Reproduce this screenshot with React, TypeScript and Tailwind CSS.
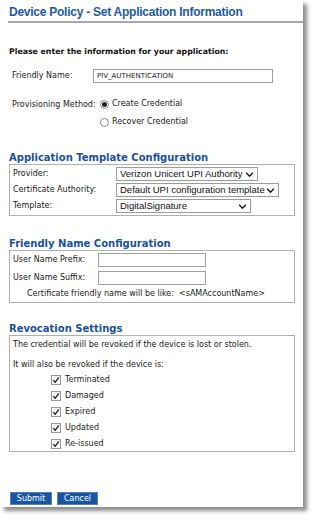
import React from 'react';

const verdana = { fontFamily: '"DejaVu Sans", Verdana, sans-serif' };
const arial = { fontFamily: '"Liberation Sans", Arial, sans-serif' };

function Radio({ checked }: { checked?: boolean }) {
  return (
    <span className="inline-flex h-[9px] w-[9px] items-center justify-center rounded-full border border-[#8a8a8a] bg-white">
      {checked && <span className="h-[5px] w-[5px] rounded-full bg-[#222]" />}
    </span>
  );
}

function Check() {
  return (
    <span className="inline-flex h-[10px] w-[10px] items-center justify-center border border-[#9a9a9a] bg-[#f4f4f4]">
      <svg viewBox="0 0 10 10" className="h-[8px] w-[8px]">
        <path d="M1.5 5.2 L4 7.8 L8.6 1.6" fill="none" stroke="#222" strokeWidth="1.6" />
      </svg>
    </span>
  );
}

function Select({ value, width }: { value: string; width: string }) {
  return (
    <div
      className={`flex h-[14px] items-center justify-between overflow-hidden whitespace-nowrap border border-[#9c9c9c] bg-white pl-[3px] pr-[3px] text-[9.5px] text-[#111] ${width}`}
      style={arial}
    >
      <span className="leading-none">{value}</span>
      <svg viewBox="0 0 10 6" className="h-[5px] w-[9px] shrink-0">
        <path d="M1 1 L5 5 L9 1" fill="none" stroke="#111" strokeWidth="1.7" />
      </svg>
    </div>
  );
}

const revokes = ['Terminated', 'Damaged', 'Expired', 'Updated', 'Re-issued'];

export default function App() {
  return (
    <div className="min-h-screen bg-white" style={verdana}>
      <div className="h-[507px] w-[303px] bg-white text-[#222] shadow-[4px_4px_4px_rgba(0,0,0,0.45)]">
        {/* Title */}
        <div className="pl-[9px] pt-[4px]">
          <h1 className="text-[12px] font-bold leading-[16px] tracking-[-0.25px] text-[#1f5aa6]" style={arial}>
            Device Policy - Set Application Information
          </h1>
        </div>
        <div className="ml-[8px] mt-[1px] h-[2px] bg-[#a8a8a8]" />

        <div className="pl-[9px] pr-[8px]">
          <p className="mt-[24px] text-[7.8px] font-bold leading-[10px] text-[#111]">
            Please enter the information for your application:
          </p>

          <div className="mt-[12px] flex items-center pl-[3px] text-[8px]">
            <span className="w-[81px]">Friendly Name:</span>
            <div className="flex h-[14px] w-[180px] items-center border border-[#a0a0a0] pl-[3px] text-[7px]">
              PIV_AUTHENTICATION
            </div>
          </div>

          <div className="mt-[15px] flex pl-[3px] text-[8px]">
            <span className="w-[88px] pt-[1px]">Provisioning Method:</span>
            <div className="flex flex-col gap-[6px]">
              <label className="flex items-center gap-[3px]">
                <Radio checked />
                <span>Create Credential</span>
              </label>
              <label className="flex items-center gap-[3px]">
                <Radio />
                <span>Recover Credential</span>
              </label>
            </div>
          </div>

          {/* Application Template */}
          <h2 className="mt-[24px] text-[10px] font-bold leading-[12px] text-[#1a519e]">
            Application Template Configuration
          </h2>
          <div className="w-[286px] border border-[#b0b0b0] px-[3px] py-[2px] text-[8px]">
            <div className="flex flex-col gap-[2px]">
              <div className="flex items-center">
                <span className="w-[103px]">Provider:</span>
                <Select value="Verizon Unicert UPI Authority" width="w-[142px]" />
              </div>
              <div className="flex items-center">
                <span className="w-[103px]">Certificate Authority:</span>
                <Select value="Default UPI configuration template" width="w-[163px]" />
              </div>
              <div className="flex items-center">
                <span className="w-[103px]">Template:</span>
                <Select value="DigitalSignature" width="w-[135px]" />
              </div>
            </div>
          </div>

          {/* Friendly Name */}
          <h2 className="mt-[22px] text-[10px] font-bold leading-[12px] text-[#1a519e]">
            Friendly Name Configuration
          </h2>
          <div className="w-[286px] border border-[#b0b0b0] px-[3px] pt-[2px] pb-[3px] text-[8px]">
            <div className="flex items-center">
              <span className="w-[85px]">User Name Prefix:</span>
              <div className="h-[14px] w-[108px] border border-[#a0a0a0]" />
            </div>
            <div className="mt-[4px] flex items-center">
              <span className="w-[85px]">User Name Suffix:</span>
              <div className="h-[14px] w-[108px] border border-[#a0a0a0]" />
            </div>
            <p className="mt-[3px] pl-[14px] leading-[11px]">
              Certificate friendly name will be like:&nbsp;&nbsp;&lt;sAMAccountName&gt;
            </p>
          </div>

          {/* Revocation */}
          <h2 className="mt-[20px] text-[10px] font-bold leading-[12px] text-[#1a519e]">
            Revocation Settings
          </h2>
          <div className="w-[286px] border border-[#b0b0b0] px-[3px] pt-[3px] pb-[2px] text-[8px]">
            <p className="leading-[11px]">The credential will be revoked if the device is lost or stolen.</p>
            <p className="mt-[9px] leading-[11px]">It will also be revoked if the device is:</p>
            <div className="mt-[4px] flex flex-col gap-[5px] pl-[38px]">
              {revokes.map(r => (
                <label key={r} className="flex items-center gap-[4px]">
                  <Check />
                  <span className="leading-[11px]">{r}</span>
                </label>
              ))}
            </div>
          </div>

          {/* Buttons */}
          <div className="mt-[40px] flex gap-[5px] pl-[1px]">
            <button className="h-[13px] w-[42px] border border-[#5a7fb5] bg-[#1655a6] text-[8px] leading-none text-white">
              Submit
            </button>
            <button className="h-[13px] w-[41px] border border-[#5a7fb5] bg-[#1655a6] text-[8px] leading-none text-white">
              Cancel
            </button>
          </div>
        </div>
      </div>
    </div>
  );
}
